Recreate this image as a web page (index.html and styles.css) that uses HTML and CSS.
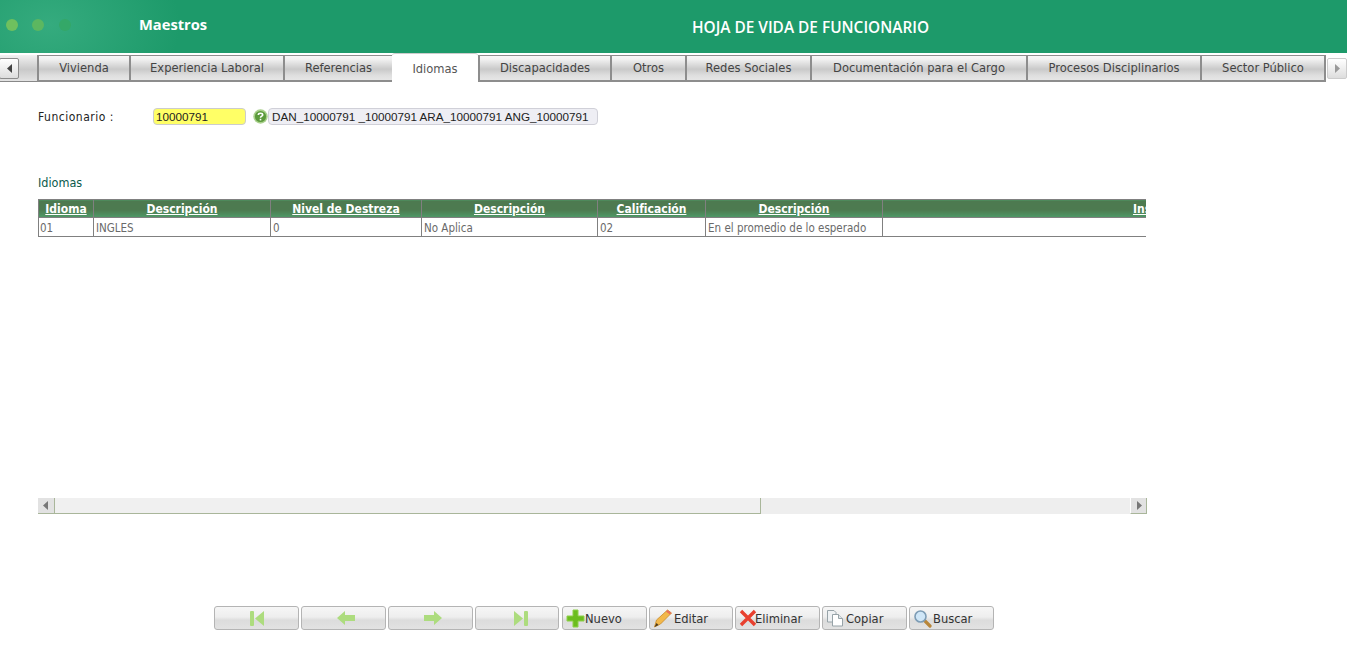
FILE: index.html
```html
<!DOCTYPE html>
<html lang="es">
<head>
<meta charset="utf-8">
<title>Hoja de vida de funcionario</title>
<link rel="stylesheet" href="styles.css">
</head>
<body>
<header class="topbar">
  <div class="brand">
    <span class="dot dot-a"></span><span class="dot dot-b"></span><span class="dot dot-c"></span>
    <span class="brand-name">Maestros</span>
  </div>
  <h1 class="page-title">HOJA DE VIDA DE FUNCIONARIO</h1>
</header>
<nav class="tabs">
  <div class="tab-scroll tab-scroll-left"><button class="arrow-btn"><svg width="7" height="9" viewBox="0 0 7 9"><path d="M6 0V9L1 4.5Z" fill="#444"/></svg></button></div>
  <div class="tab w-viv">Vivienda</div>
  <div class="tab w-exp">Experiencia Laboral</div>
  <div class="tab w-ref">Referencias</div>
  <div class="tab active w-idi">Idiomas</div>
  <div class="tab w-dis">Discapacidades</div>
  <div class="tab w-otr">Otros</div>
  <div class="tab w-red">Redes Sociales</div>
  <div class="tab w-doc">Documentación para el Cargo</div>
  <div class="tab w-pro">Procesos Disciplinarios</div>
  <div class="tab w-sec">Sector Público</div>
  <div class="tab-scroll tab-scroll-right"><button class="arrow-btn"><svg width="7" height="9" viewBox="0 0 7 9"><path d="M1 0V9L6 4.5Z" fill="#999"/></svg></button></div>
</nav>
<main class="content">
  <div class="field-row">
    <label class="field-label">Funcionario :</label>
    <div class="field-input">10000791</div>
    <svg class="help-icon" width="15" height="15" viewBox="0 0 15 15"><circle cx="7.5" cy="7.5" r="7.2" fill="#a9d08c"/><circle cx="7.500" cy="7.500" r="5.600" fill="#5c9a3c"/><path d="M5.300 5.900C5.300 3.700 9.700 3.700 9.700 5.900C9.700 7.300 7.500 7.100 7.500 8.800" fill="none" stroke="#fff" stroke-width="1.600"/><rect x="6.700" y="9.800" width="1.600" height="1.600" fill="#fff"/></svg>
    <div class="field-desc">DAN_10000791 _10000791 ARA_10000791 ANG_10000791</div>
  </div>
  <h2 class="section-title">Idiomas</h2>
  <div class="grid-wrap">
    <table class="grid">
      <colgroup>
        <col class="c1"><col class="c2"><col class="c3"><col class="c4"><col class="c5"><col class="c6"><col class="c7">
      </colgroup>
      <thead>
        <tr>
          <th><a>Idioma</a></th><th><a>Descripción</a></th><th><a>Nivel de Destreza</a></th><th><a>Descripción</a></th><th><a>Calificación</a></th><th><a>Descripción</a></th><th><a>Institución</a></th>
        </tr>
      </thead>
      <tbody>
        <tr><td class="first">01</td><td>INGLES</td><td>0</td><td>No Aplica</td><td>02</td><td>En el promedio de lo esperado</td><td></td></tr>
      </tbody>
    </table>
  </div>
  <div class="hscroll">
    <div class="hs-btn"><svg width="6" height="9" viewBox="0 0 6 9"><path d="M5 0V9L0 4.5Z" fill="#777"/></svg></div>
    <div class="hs-track"><div class="hs-thumb"></div></div>
    <div class="hs-btn hs-btn-right"><svg width="6" height="9" viewBox="0 0 6 9"><path d="M1 0V9L6 4.5Z" fill="#777"/></svg></div>
  </div>
  <div class="toolbar">
    <button class="tb-btn"><svg width="17" height="17" viewBox="0 0 17 17"><rect x="0" y="1" width="4" height="15" rx="1" fill="#addc7e"/><path d="M5 8.5 14 1V16Z" fill="#addc7e"/></svg></button>
    <button class="tb-btn"><svg width="18" height="14" viewBox="0 0 18 14"><path d="M0 7 8 0V4H18V10H8V14Z" fill="#addc7e"/></svg></button>
    <button class="tb-btn"><svg width="18" height="14" viewBox="0 0 18 14"><path d="M18 7 10 0V4H0V10H10V14Z" fill="#addc7e"/></svg></button>
    <button class="tb-btn tb-narrow"><svg width="17" height="17" viewBox="0 0 17 17"><rect x="13" y="1" width="4" height="15" rx="1" fill="#addc7e"/><path d="M12 8.5 3 1V16Z" fill="#addc7e"/></svg></button>
    <button class="tb-btn tb-text tb-gap"><svg width="19" height="19" viewBox="0 0 19 19"><path d="M7 1H12V7H18V12H12V18H7V12H1V7H7Z" fill="#6cbd1e" stroke="#8ed04a" stroke-width="1"/></svg>Nuevo</button>
    <button class="tb-btn tb-text tb-narrow"><svg class="ic-edit" width="20" height="19" viewBox="0 0 19 19"><path d="M1 18 3 11 14 1 18 4 7 15Z" fill="#f2b84b" stroke="#c98a2a" stroke-width=".8"/><path d="M14 1 18 4 16.4 5.600 12.400 2.400Z" fill="#e8705a"/><path d="M1 18 3 14 5 16Z" fill="#4a3a20"/></svg>Editar</button>
    <button class="tb-btn tb-text ic-tight"><svg width="18" height="18" viewBox="0 0 18 18"><path d="M2 2 16 16M16 2 2 16" stroke="#e8402f" stroke-width="3.400" fill="none"/></svg>Eliminar</button>
    <button class="tb-btn tb-text ic-wide"><svg width="18" height="18" viewBox="0 0 18 18"><path d="M1.500 1.500H8L10 3.500V13H1.500Z" fill="#eef1f3" stroke="#97a3a8"/><path d="M6.500 5.500H12.500L16.500 9.500V17H6.500Z" fill="#fff" stroke="#97a3a8"/><path d="M12.500 5.500V9.500H16.500" fill="#dfe5e8" stroke="#97a3a8"/></svg>Copiar</button>
    <button class="tb-btn tb-text ic-mid"><svg width="19" height="19" viewBox="0 0 19 19"><path d="M11 11 17 17" stroke="#b8863a" stroke-width="3.200" stroke-linecap="round"/><circle cx="7.500" cy="7.500" r="5.500" fill="#cfe6f7" stroke="#7d9cb5" stroke-width="1.600"/></svg>Buscar</button>
  </div>
</main>
</body>
</html>
```
FILE: styles.css
```css
* { box-sizing: border-box; }
html, body { margin: 0; padding: 0; background: #fff; overflow: hidden; }
body { width: 1347px; height: 666px; font-family: "DejaVu Sans Condensed", "DejaVu Sans", sans-serif; }

.topbar {
  height: 53px;
  display: flex;
  align-items: center;
  background: radial-gradient(ellipse 130px 90px at 50px 25px, #35ab7e 0%, #1d9a6a 100%) #1d9a6a;
  color: #fff;
}
.brand { width: 692px; display: flex; align-items: center; align-self: flex-start; height: 49px; padding-left: 6px; flex: none; }
.dot { width: 12px; height: 12px; border-radius: 50%; margin-right: 14px; flex: none; }
.dot-a { background: #6fc05e; }
.dot-b { background: #5cb760; }
.dot-c { background: #34a868; margin-left: 1px; }
.brand-name { font: 700 14.7px/20px "Open Sans", sans-serif; margin: -1px 0 0 54px; }
.page-title { margin: 1px 0 0; font: 600 15.4px "Open Sans", sans-serif; color: #fff; white-space: nowrap; }

.tabs { height: 29px; display: flex; align-items: stretch; color: #444; font-size: 12.8px; }
.tab-scroll { display: flex; align-items: center; margin-top: 2px; background: linear-gradient(#f2f2f2, #c9c9c9 55%, #e3e3e3); border-bottom: 1px solid #888; }
.tab-scroll-left { width: 37px; justify-content: flex-start; }
.tab-scroll-right { flex: 1; background: #fff; border-bottom: 0; padding-left: 1px; }
.arrow-btn { width: 20px; height: 21px; padding: 0; border: 1px solid #8c8c8c; border-radius: 2px; background: linear-gradient(#fff, #ddd); display: flex; align-items: center; justify-content: center; }
.tab-scroll-right .arrow-btn { border-color: #ccc; }
.tab-scroll-left .arrow-btn { margin-left: -1px; }
.tab {
  display: flex; align-items: center; justify-content: center; white-space: nowrap;
  margin-top: 2px; padding-bottom: 1px;
  border: 2px solid #8d8d8d; border-width: 1px 0 2px 2px;
  background: linear-gradient(#f7f7f7, #f0f0f0 15%, #c9c9c9 55%, #dedede 80%, #e6e6e6);
}
.tab.active { margin-top: 0; padding: 1px 0 1px; background: #fff; border: 0; border-top: 1px solid #ccc; border-radius: 3px 3px 0 0; color: #555; }
.w-viv { width: 92px; } .w-exp { width: 154px; } .w-ref { width: 109px; } .w-idi { width: 86px; }
.w-dis { width: 132px; } .w-otr { width: 75px; } .w-red { width: 125px; } .w-doc { width: 216px; }
.w-pro { width: 174px; } .w-sec { width: 126px; border-right: 2px solid #8d8d8d; }

.content { padding: 26px 0 0 38px; }
.field-row { display: flex; align-items: center; height: 17px; }
.field-label { width: 115px; font-size: 12px; color: #222; letter-spacing: .5px; }
.field-input { width: 93px; height: 17px; padding: 0 2px; background: #ffff66; border: 1px solid #ccc; border-radius: 4px; font: 11.7px/15px "Liberation Sans", sans-serif; color: #222; }
.help-icon { margin-left: 7px; flex: none; }
.field-desc { width: 330px; height: 17px; padding: 0 3px; background: #eeeef4; border: 1px solid #d0d0d8; border-radius: 4px; font: 11.7px/15px "Liberation Sans", sans-serif; color: #222; white-space: nowrap; }

.section-title { margin: 50px 0 0; height: 24px; font: 400 12.5px/16px "DejaVu Sans Condensed", "DejaVu Sans", sans-serif; color: #0b5a4c; }
.grid-wrap { width: 1108px; height: 38px; overflow: hidden; }
.grid { border-collapse: collapse; table-layout: fixed; width: 1410px; font-size: 11.5px; color: #6a6a6a; }
.c1 { width: 55px; } .c2 { width: 177px; } .c3 { width: 151px; } .c4 { width: 176px; } .c5 { width: 108px; } .c6 { width: 177px; } .c7 { width: 566px; }
.grid th { height: 18px; padding: 0; border: 1px solid #808080; background: linear-gradient(#4d7a50 55%, #4f9a68); color: #fff; font-size: 12px; font-weight: 700; text-align: center; white-space: nowrap; }
.grid th a { text-decoration: underline; }
.grid td { height: 19px; padding: 1px 2px 0 2px; border: 1px solid #808080; white-space: nowrap; background: #fff; }
.grid td.first { padding-left: 1px; }

.hscroll { width: 1109px; height: 16px; margin-top: 261px; display: flex; background: #eee; }
.hs-btn { width: 17px; flex: none; display: flex; align-items: center; justify-content: center; background: #e2e2e2; border-bottom: 1px solid #a9b69a; border-right: 1px solid #a9b69a; }
.hs-track { flex: 1; }
.hs-thumb { width: 706px; height: 16px; background: #f0f0f0; border-bottom: 1px solid #a9b69a; border-right: 1px solid #a9b69a; }
.hs-btn-right { border-left: 1px solid #fff; }

.toolbar { display: flex; margin: 92px 0 0 176px; gap: 2px; }
.tb-btn {
  width: 85px; height: 24px; padding: 0 0 0 4px; display: flex; align-items: center; justify-content: center;
  border: 1px solid #b4b4b4; border-radius: 3px; background: linear-gradient(#f6f6f6, #eee 45%, #dcdcdc 60%, #e2e2e2);
  font: 12.8px "DejaVu Sans Condensed", "DejaVu Sans", sans-serif; color: #333;
}
.tb-narrow { width: 84px; }
.tb-gap { margin-left: 1px; }
.tb-text { justify-content: flex-start; padding-left: 3px; }
.ic-edit { margin-right: 1px; }
.ic-tight svg { margin-right: -2px; }
.ic-wide svg { margin-right: 2px; }
.ic-mid svg { margin-right: 1px; }
```
